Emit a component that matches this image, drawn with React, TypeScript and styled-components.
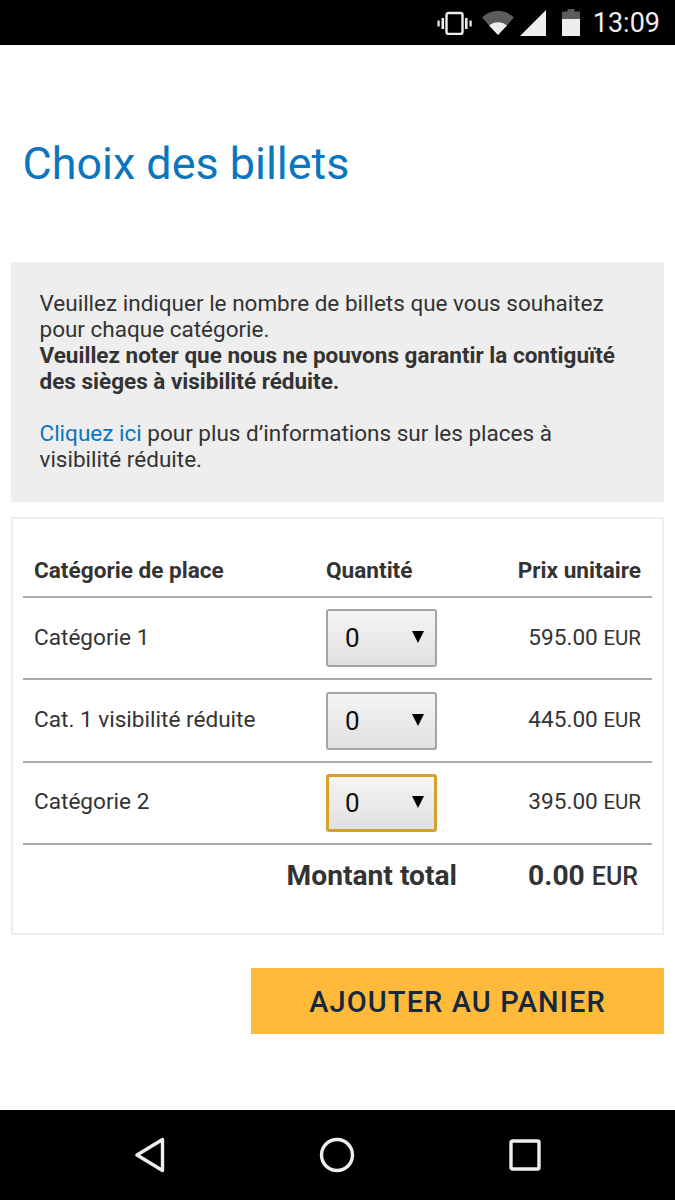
import { FC } from 'react'
import styled, { createGlobalStyle } from 'styled-components'

const categories = [
  { name: 'Catégorie 1', price: '595.00', focused: false },
  { name: 'Cat. 1 visibilité réduite', price: '445.00', focused: false },
  { name: 'Catégorie 2', price: '395.00', focused: true }
]

const App: FC = () => {
  return (
    <Page>
      <GlobalStyle />
      <StatusBar>
        <svg width="36" height="24" viewBox="0 0 36 24" fill="none">
          <rect x="9.5" y="2" width="16" height="21" rx="2" stroke="#eee" strokeWidth="2.4" />
          <rect x="4.5" y="7" width="2.6" height="11" fill="#eee" />
          <rect x="28" y="7" width="2.6" height="11" fill="#eee" />
          <rect x="0.5" y="9.5" width="2.2" height="6" fill="#eee" />
          <rect x="32.5" y="9.5" width="2.2" height="6" fill="#eee" />
        </svg>
        <WifiIcon width="32" height="26" viewBox="0 0 32 26">
          <path d="M0 7.5 C9 -1.5 23 -1.5 32 7.5 L16 25 Z" fill="#5c5c5c" />
          <path d="M7 15.5 C12 11 20 11 25 15.5 L16 25 Z" fill="#eee" />
        </WifiIcon>
        <SignalIcon width="26" height="26" viewBox="0 0 26 26">
          <path d="M26 0 V26 H0 Z" fill="#eee" />
        </SignalIcon>
        <BatteryIcon width="18" height="27" viewBox="0 0 18 27">
          <path d="M5.5 0 H12.5 V2.5 H18 V10 H0 V2.5 H5.5 Z" fill="#5c5c5c" />
          <rect y="10" width="18" height="17" fill="#eee" />
        </BatteryIcon>
        <Clock>13:09</Clock>
      </StatusBar>

      <Main>
        <Title>Choix des billets</Title>

        <Notice>
          Veuillez indiquer le nombre de billets que vous souhaitez
          <br />
          pour chaque catégorie.
          <br />
          <strong>
            Veuillez noter que nous ne pouvons garantir la contiguïté
            <br />
            des sièges à visibilité réduite.
          </strong>
          <br />
          <br />
          <NoticeLink href="#">Cliquez ici</NoticeLink> pour plus d’informations sur les places à
          <br />
          visibilité réduite.
        </Notice>

        <Card>
          <HeadRow>
            <span>Catégorie de place</span>
            <span>Quantité</span>
            <PriceHead>Prix unitaire</PriceHead>
          </HeadRow>

          {categories.map(c => (
            <Row key={c.name}>
              <span>{c.name}</span>
              <SelectWrap>
                <QtySelect $focused={c.focused} defaultValue="0">
                  <option value="0">0</option>
                  <option value="1">1</option>
                  <option value="2">2</option>
                </QtySelect>
              </SelectWrap>
              <Price>
                {c.price} <small>EUR</small>
              </Price>
            </Row>
          ))}

          <TotalRow>
            <span>Montant total</span>
            <TotalPrice>
              0.00 <small>EUR</small>
            </TotalPrice>
          </TotalRow>
        </Card>

        <Actions>
          <AddButton type="button">AJOUTER AU PANIER</AddButton>
        </Actions>
      </Main>

      <NavBar>
        <svg width="30" height="36" viewBox="0 0 30 36" fill="none">
          <path d="M27.5 2.5 V33.5 L2 18 Z" stroke="#eee" strokeWidth="3.4" strokeLinejoin="round" />
        </svg>
        <svg width="36" height="36" viewBox="0 0 36 36" fill="none">
          <circle cx="18" cy="18" r="15.5" stroke="#eee" strokeWidth="3.4" />
        </svg>
        <svg width="32" height="32" viewBox="0 0 32 32" fill="none">
          <rect x="2" y="2" width="28" height="28" rx="1.5" stroke="#eee" strokeWidth="3.4" />
        </svg>
      </NavBar>
    </Page>
  )
}

const GlobalStyle = createGlobalStyle`
  html, body {
    margin: 0;
    padding: 0;
    background: #fff;
  }
  * {
    box-sizing: border-box;
  }
`

const Page = styled.div`
  width: 675px;
  height: 1200px;
  display: flex;
  flex-direction: column;
  overflow: hidden;
  font-family: Roboto, 'Liberation Sans', sans-serif;
  color: #333;
`

const StatusBar = styled.div`
  height: 45px;
  flex: none;
  background: #000;
  display: flex;
  align-items: center;
  justify-content: flex-end;
  padding-right: 15px;
`

const WifiIcon = styled.svg`
  margin-left: 9px;
`

const SignalIcon = styled.svg`
  margin-left: 6px;
`

const BatteryIcon = styled.svg`
  margin-left: 16px;
`

const Clock = styled.span`
  margin-left: 13px;
  font-size: 27px;
  color: #eee;
`

const Main = styled.main`
  flex: 1;
  padding: 0 11px;
`

const Title = styled.h1`
  margin: 0;
  padding: 90px 0 0 11.5px;
  height: 217px;
  font-size: 44.9px;
  line-height: 58px;
  font-weight: 400;
  color: #0b76bd;
`

const Notice = styled.div`
  height: 240px;
  padding: 28px 28.5px 0;
  background: #eee;
  font-size: 22.5px;
  line-height: 26px;
  color: #333;
`

const NoticeLink = styled.a`
  color: #0b76bd;
  text-decoration: none;
`

const Card = styled.section`
  margin-top: 15px;
  height: 418px;
  padding: 0 10px;
  border: 2px solid #eee;
`

const HeadRow = styled.div`
  display: grid;
  grid-template-columns: 292px 1fr 1fr;
  align-items: center;
  height: 79px;
  padding: 26px 11px 0;
  border-bottom: 2px solid #aaa;
  font-size: 22.6px;
  font-weight: 700;
`

const PriceHead = styled.span`
  text-align: right;
`

const Row = styled.div`
  display: grid;
  grid-template-columns: 292px 111px 1fr;
  align-items: center;
  height: 82.4px;
  padding: 0 11px 2px;
  border-bottom: 2px solid #aaa;
  font-size: 22.6px;
`

const SelectWrap = styled.div`
  position: relative;
  width: 111px;
  height: 58px;
  margin-top: 2px;

  &::after {
    content: '';
    position: absolute;
    top: 22px;
    right: 13px;
    border-left: 6px solid transparent;
    border-right: 6px solid transparent;
    border-top: 12px solid #000;
    pointer-events: none;
  }
`

const QtySelect = styled.select<{ $focused: boolean }>`
  appearance: none;
  width: 100%;
  height: 100%;
  padding: 0 0 0 ${p => (p.$focused ? '16px' : '17px')};
  border: ${p => (p.$focused ? '3px solid #d6a02f' : '2px solid #a4a4a4')};
  border-radius: 3px;
  background: linear-gradient(#f5f5f5, #e0e0e0);
  font-family: Roboto, 'Liberation Sans', sans-serif;
  font-size: 26px;
  color: #111;
  outline: none;
`

const Price = styled.span`
  text-align: right;

  small {
    font-size: 20.5px;
  }
`

const TotalRow = styled.div`
  display: flex;
  justify-content: flex-end;
  align-items: center;
  height: 60px;
  padding-right: 14px;
  font-size: 28.2px;
  font-weight: 700;
`

const TotalPrice = styled.span`
  margin-left: 71px;

  small {
    font-size: 25px;
    font-weight: 500;
  }
`

const Actions = styled.div`
  display: flex;
  justify-content: flex-end;
  margin-top: 33px;
`

const AddButton = styled.button`
  width: 413px;
  height: 66px;
  padding: 2px 0 0;
  border: none;
  background: #ffba3b;
  font-family: Roboto, 'Liberation Sans', sans-serif;
  font-size: 29px;
  font-weight: 500;
  letter-spacing: 1.1px;
  color: #14293f;
`

const NavBar = styled.nav`
  height: 90px;
  flex: none;
  background: #000;
  display: flex;
  align-items: center;
  justify-content: center;

  svg {
    margin: 0 77px;
  }
`

export default App
